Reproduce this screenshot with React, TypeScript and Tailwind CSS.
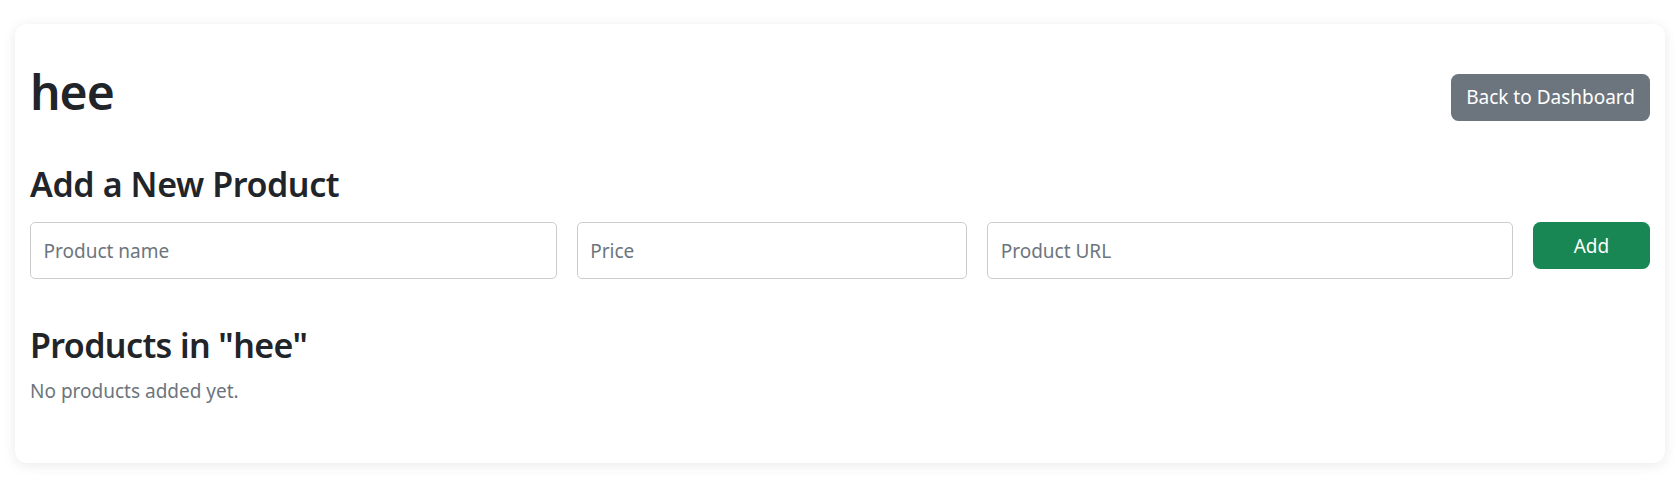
import React, { useState } from 'react';

const font = { fontFamily: '"Segoe UI", "Noto Sans", "Open Sans", sans-serif' };

const App = () => {
  const [name, setName] = useState('');
  const [price, setPrice] = useState('');
  const [url, setUrl] = useState('');

  const inputCls =
    'w-full h-[57px] px-[12.5px] text-[19px] text-[#212529] bg-white border border-[#cccccc] rounded-[5px] placeholder:text-[#6c757d] focus:outline-none';

  return (
    <div className="min-h-screen bg-white pt-[24px] pb-[39px] pl-[15px] pr-[10px]" style={font}>
      <div className="bg-white rounded-[12px] shadow-[0_2px_14px_rgba(0,0,0,0.09)] pt-[38px] pb-[37px] px-[15px]">
        <div className="flex justify-between items-center">
          <h1 className="text-[48px] leading-[60px] font-semibold tracking-[-1px] text-[#212529] mb-[10px]">hee</h1>
          <button className="h-[47px] px-[15px] rounded-[7.5px] bg-[#6c757d] text-white text-[19px] leading-[30px]">
            Back to Dashboard
          </button>
        </div>

        <h3 className="mt-[31px] mb-[17px] text-[34px] leading-[42px] font-semibold tracking-[-0.4px] text-[#212529]">
          Add a New Product
        </h3>
        <form
          onSubmit={(e) => e.preventDefault()}
          className="grid grid-cols-[526fr_390fr_525fr_117fr] gap-x-[20px] items-start"
        >
          <input
            type="text"
            value={name}
            onChange={(e) => setName(e.target.value)}
            placeholder="Product name"
            className={inputCls}
          />
          <input
            type="text"
            value={price}
            onChange={(e) => setPrice(e.target.value)}
            placeholder="Price"
            className={inputCls}
          />
          <input
            type="text"
            value={url}
            onChange={(e) => setUrl(e.target.value)}
            placeholder="Product URL"
            className={inputCls}
          />
          <button
            type="submit"
            className="w-full h-[47px] rounded-[7.5px] bg-[#198754] text-white text-[19px] leading-[30px]"
          >
            Add
          </button>
        </form>

        <h3 className="mt-[45px] mb-[10px] text-[34px] leading-[42px] font-semibold tracking-[-0.6px] text-[#212529]">
          Products in "hee"
        </h3>
        <p className="mb-[20px] text-[19px] leading-[30px] text-[#6c757d]">No products added yet.</p>
      </div>
    </div>
  );
};

export default App;
